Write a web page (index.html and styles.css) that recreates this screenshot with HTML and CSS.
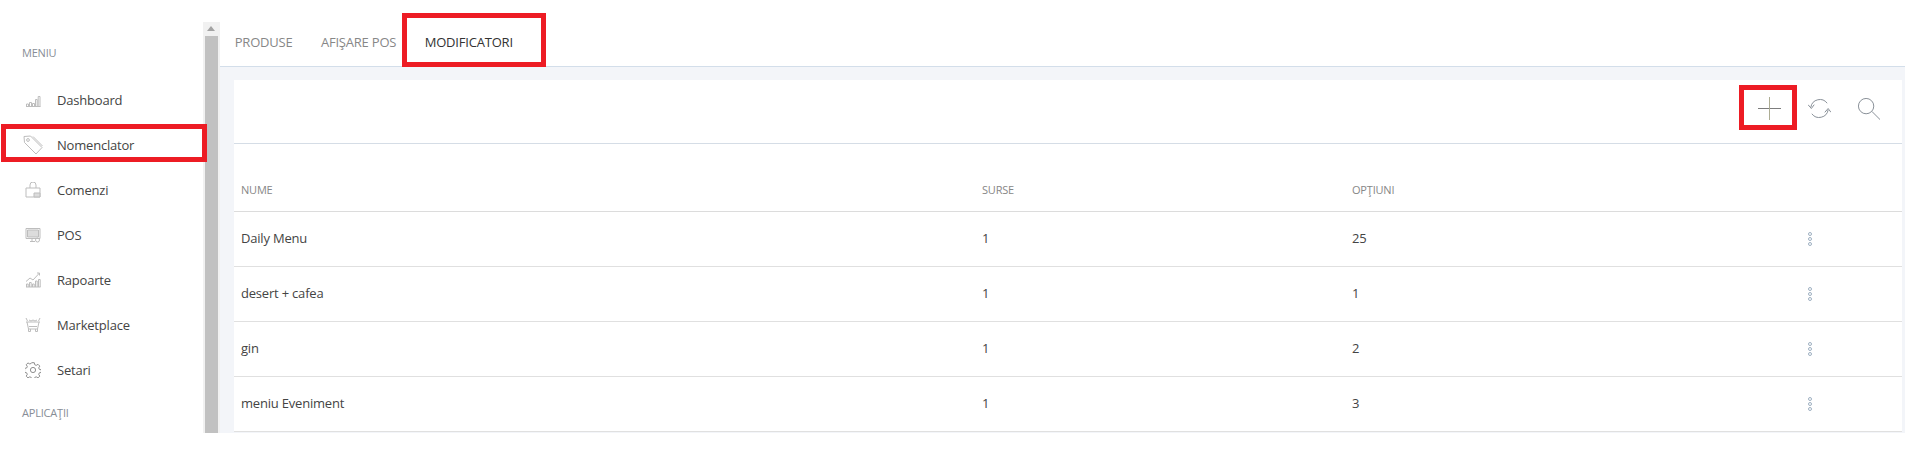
FILE: index.html
```html
<!DOCTYPE html>
<html>
<head>
<meta charset="utf-8">
<title>Modificatori</title>
<link rel="stylesheet" href="styles.css">
</head>
<body>
<div class="app">
  <div class="sidebar">
    <div class="menuTitle">MENIU</div>
    <a class="menuItem">
      <svg class="menuIcon" viewBox="0 0 16 16"><path d="M1 14.500h14.500M1.500 14.500v-2.500h2v2.500M4.500 14.500v-4h2v4M7.500 14.500v-3h2v3M10.500 14.500v-7h1.700v7M13.200 14.500v-10h1.800v10"/></svg>
      Dashboard
    </a>
    <a class="menuItem">
      <svg class="menuIcon bigIcon" viewBox="0 0 20 20"><path d="M1 1.500l6.500-.5 11.500 11.500-6 6.500L1.500 7.500zM10 1.500l9.500 9.500"/><circle cx="5" cy="5" r="1.400"/></svg>
      Nomenclator
    </a>
    <a class="menuItem">
      <svg class="menuIcon" viewBox="0 0 16 16"><path d="M1 6h14v9H1zM5 6V3a3 3 0 0 1 6 0v3"/><path class="iconFill" d="M9 11h6v4H9z"/></svg>
      Comenzi
    </a>
    <a class="menuItem">
      <svg class="menuIcon" viewBox="0 0 16 16"><path class="iconFill" d="M2.500 3h11v7h-11z"/><path d="M1 1.500h14v10H1zM5 14.500h5M7 11.500v3"/><circle cx="12.500" cy="13" r="2"/></svg>
      POS
    </a>
    <a class="menuItem">
      <svg class="menuIcon" viewBox="0 0 16 16"><path d="M1 15h14.500M1.500 15v-3h1.700v3M4.500 15v-4.500h1.700V15M7.500 15v-3h1.700v3M10.500 15V9h1.700v6M13.500 15V7.500h1.700V15M1 9.500l4-3.500 3 2 6.500-7M12 1h2.500v2.500"/></svg>
      Rapoarte
    </a>
    <a class="menuItem">
      <svg class="menuIcon" viewBox="0 0 16 16"><path d="M1 5h14M2 5l1.500 7h9L14 5M1 1l1.500 3M15 1l-1.500 3M4 3l2 1 2-1 2 1 2-1M3.500 12v2.500h2V12M10.500 12v2.500h2V12M4 9.500h8"/></svg>
      Marketplace
    </a>
    <a class="menuItem">
      <svg class="menuIcon gearIcon" viewBox="0 0 16 16"><circle cx="8" cy="8" r="2.600"/><path d="M6.700.7h2.600l.4 2 1.500.7 1.800-1.100 1.800 1.800-1.100 1.800.7 1.500 2 .4v2.600l-2 .4-.7 1.500 1.100 1.800-1.800 1.800-1.800-1.100-1.500.7-.4 2H6.700l-.4-2-1.500-.7-1.800 1.100-1.800-1.800 1.100-1.800-.7-1.500-2-.4V6.400l2-.4.700-1.500-1.100-1.800 1.800-1.800 1.800 1.100 1.500-.7z"/></svg>
      Setari
    </a>
    <div class="menuTitle appsTitle">APLICAŢII</div>
  </div>

  <div class="scrollTrack">
    <div class="scrollArrow"></div>
    <div class="scrollThumb"></div>
  </div>

  <div class="content">
    <div class="tabs">
      <a class="tab">PRODUSE</a>
      <a class="tab">AFIŞARE POS</a>
      <a class="tab tabActive">MODIFICATORI</a>
    </div>
    <div class="card">
      <div class="toolbar">
        <svg class="toolIcon" viewBox="0 0 24 24"><path class="plusH" d="M0 12h24"/><path class="plusV" d="M12 0v24"/></svg>
        <svg class="toolIcon" viewBox="0 0 24 24"><path d="M3 10.500A9.500 9.500 0 0 1 20 6.500M21 13.500A9.500 9.500 0 0 1 4 17.500M0 8l3.500 4L6.500 8M17.500 16l3.500-4 3 4"/></svg>
        <svg class="toolIcon" viewBox="0 0 24 24"><circle cx="9.500" cy="9.500" r="8"/><path d="M15.500 15l9 9"/></svg>
      </div>
      <table class="grid">
        <thead>
          <tr><th class="colName">NUME</th><th class="colSrc">SURSE</th><th class="colOpt">OPŢIUNI</th><th></th></tr>
        </thead>
        <tbody>
          <tr><td>Daily Menu</td><td>1</td><td>25</td><td><span class="dots"><i></i><i></i><i></i></span></td></tr>
          <tr><td>desert + cafea</td><td>1</td><td>1</td><td><span class="dots"><i></i><i></i><i></i></span></td></tr>
          <tr><td>gin</td><td>1</td><td>2</td><td><span class="dots"><i></i><i></i><i></i></span></td></tr>
          <tr><td>meniu Eveniment</td><td>1</td><td>3</td><td><span class="dots"><i></i><i></i><i></i></span></td></tr>
        </tbody>
      </table>
    </div>
  </div>
</div>

<div class="redBox boxMenu"></div>
<div class="redBox boxTab"></div>
<div class="redBox boxAdd"></div>
</body>
</html>
```

FILE: styles.css
```css
html, body {
  margin: 0;
  padding: 0;
  background: #fff;
  overflow: hidden;
}

body {
  font-family: "Open Sans", sans-serif;
  font-size: 13px;
  letter-spacing: -0.2px;
  color: #444;
  height: 459px;
}

.app {
  display: flex;
  margin-top: 22px;
  height: 411px;
  overflow: hidden;
}

/* left menu */
.sidebar {
  width: 203px;
  flex: none;
}

.menuTitle {
  font-size: 11px;
  line-height: 16px;
  color: #878d96;
  padding-left: 22px;
  margin-top: 23px;
  margin-bottom: 16px;
}

.appsTitle {
  margin-top: 13px;
}

.menuItem {
  display: flex;
  align-items: center;
  height: 45px;
  color: #444;
}

.menuIcon {
  width: 16px;
  height: 16px;
  margin-left: 25px;
  margin-right: 16px;
  flex: none;
  fill: none;
  stroke: #bdbdbd;
  stroke-width: 1;
}

.bigIcon {
  width: 20px;
  height: 20px;
  margin-left: 23px;
  margin-right: 14px;
}

.gearIcon {
  stroke: #8f8f8f;
}

.iconFill {
  fill: #dcdcdc;
}

/* fake scrollbar */
.scrollTrack {
  width: 17px;
  flex: none;
  background: #f1f1f1;
}

.scrollArrow {
  width: 0;
  height: 0;
  margin: 4px 0 5px 4px;
  border-left: 4px solid transparent;
  border-right: 4px solid transparent;
  border-bottom: 5px solid #a3a3a3;
}

.scrollThumb {
  width: 13px;
  height: 400px;
  margin-left: 2px;
  background: #c1c1c1;
}

/* right side */
.content {
  flex: 1;
  min-width: 0;
  background: #f3f5f9;
  padding-right: 3px;
}

.tabs {
  display: flex;
  height: 44px;
  background: #fff;
  border-bottom: 1px solid #d3deea;
  margin-right: -3px;
  padding-left: 0.5px;
}

.tab {
  line-height: 40px;
  padding: 0 14.2px;
  color: #878787;
}

.tabActive {
  color: #333;
}

.card {
  margin: 13px 0 0 14px;
  background: #fff;
}

.toolbar {
  display: flex;
  justify-content: flex-end;
  align-items: center;
  gap: 26.5px;
  height: 64px;
  box-sizing: border-box;
  padding: 0 22px 7px 0;
  border-bottom: 1px solid #d5dde6;
}

.toolIcon {
  width: 23px;
  height: 23px;
  fill: none;
  stroke: #848b93;
  stroke-width: 1;
}

.plusH {
  stroke: #777;
}

.plusV {
  stroke: #a9a98f;
}

.grid {
  width: 100%;
  border-collapse: collapse;
  table-layout: fixed;
}

.grid th {
  font-size: 11px;
  font-weight: 400;
  color: #878787;
  text-align: left;
  height: 67px;
  padding: 24px 7px 0;
  box-sizing: border-box;
  border-bottom: 1px solid #dcdcdc;
}

.colName {
  width: 741px;
}

.colSrc {
  width: 370px;
}

.colOpt {
  width: 456px;
}

.grid td {
  height: 55px;
  padding: 0 7px 2px;
  box-sizing: border-box;
  border-bottom: 1px solid #e0e0e0;
  color: #444;
}

.dots {
  display: inline-flex;
  flex-direction: column;
  gap: 1px;
  vertical-align: middle;
}

.dots i {
  width: 4px;
  height: 4px;
  box-sizing: border-box;
  border: 1px solid #9fb0c2;
  border-radius: 50%;
  display: block;
}

/* red markers drawn over the screenshot */
.redBox {
  position: absolute;
  border: 5px solid #ed1c24;
  box-sizing: border-box;
}

.boxMenu {
  left: 1px;
  top: 124px;
  width: 206px;
  height: 38px;
}

.boxTab {
  left: 402px;
  top: 13px;
  width: 144px;
  height: 54px;
}

.boxAdd {
  left: 1739px;
  top: 85px;
  width: 58px;
  height: 45px;
}
```
